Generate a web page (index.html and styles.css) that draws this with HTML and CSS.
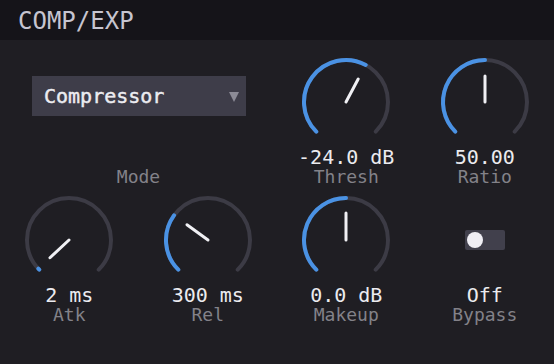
FILE: index.html
```html
<!DOCTYPE html>
<html lang="en">
<head>
    <meta charset="UTF-8">
    <meta name="viewport" content="width=device-width, initial-scale=1.0">
    <title>COMP/EXP</title>
    <link rel="stylesheet" href="styles.css">
</head>
<body>
    <div class="header">COMP/EXP</div>
    <div class="panel">
        <div class="cell mode">
            <div class="select">
                <span>Compressor</span>
                <svg class="arrow" width="10" height="10" viewBox="0 0 10 10">
                    <polygon points="0,0 10,0 5,10"/>
                </svg>
            </div>
            <div class="label">Mode</div>
        </div>

        <div class="cell">
            <svg class="knob" width="92" height="92" viewBox="0 0 92 92">
                <path class="track" d="M16.3 75.7 A42 42 0 1 1 75.7 75.7"/>
                <path class="fill" d="M16.3 75.7 A42 42 0 0 1 65.72 8.92"/>
                <line class="needle" x1="46" y1="46" x2="58.21" y2="23.04"/>
            </svg>
            <div class="value">-24.0 dB</div>
            <div class="label">Thresh</div>
        </div>

        <div class="cell">
            <svg class="knob" width="92" height="92" viewBox="0 0 92 92">
                <path class="track" d="M16.3 75.7 A42 42 0 1 1 75.7 75.7"/>
                <path class="fill" d="M16.3 75.7 A42 42 0 0 1 46 4"/>
                <line class="needle" x1="46" y1="46" x2="46" y2="20"/>
            </svg>
            <div class="value">50.00</div>
            <div class="label">Ratio</div>
        </div>

        <div class="cell">
            <svg class="knob" width="92" height="92" viewBox="0 0 92 92">
                <path class="track" d="M16.3 75.7 A42 42 0 1 1 75.7 75.7"/>
                <path class="fill" d="M16.3 75.7 A42 42 0 0 1 15.28 74.64"/>
                <line class="needle" x1="46" y1="46" x2="26.98" y2="63.73"/>
            </svg>
            <div class="value">2 ms</div>
            <div class="label">Atk</div>
        </div>

        <div class="cell">
            <svg class="knob" width="92" height="92" viewBox="0 0 92 92">
                <path class="track" d="M16.3 75.7 A42 42 0 1 1 75.7 75.7"/>
                <path class="fill" d="M16.3 75.7 A42 42 0 0 1 12.02 21.31"/>
                <line class="needle" x1="46" y1="46" x2="24.97" y2="30.72"/>
            </svg>
            <div class="value">300 ms</div>
            <div class="label">Rel</div>
        </div>

        <div class="cell">
            <svg class="knob" width="92" height="92" viewBox="0 0 92 92">
                <path class="track" d="M16.3 75.7 A42 42 0 1 1 75.7 75.7"/>
                <path class="fill" d="M16.3 75.7 A42 42 0 0 1 46 4"/>
                <line class="needle" x1="46" y1="46" x2="46" y2="19"/>
            </svg>
            <div class="value">0.0 dB</div>
            <div class="label">Makeup</div>
        </div>

        <div class="cell">
            <div class="switch-box">
                <div class="switch"><div class="thumb"></div></div>
            </div>
            <div class="value">Off</div>
            <div class="label">Bypass</div>
        </div>
    </div>
</body>
</html>
```

FILE: styles.css
```css
body {
    margin: 0;
    width: 554px;
    height: 364px;
    background-color: #1f1e23;
    font-family: "DejaVu Sans Mono", "Liberation Mono", monospace;
    overflow: hidden;
}
.header {
    height: 40px;
    background-color: #151419;
    color: #c6c5d0;
    font-size: 24px;
    line-height: 42px;
    padding-left: 18px;
}
.panel {
    display: grid;
    grid-template-columns: repeat(4, 1fr);
    row-gap: 7px;
    padding-top: 16px;
}
.cell {
    display: flex;
    flex-direction: column;
    align-items: center;
}
.cell.mode {
    grid-column: span 2;
    align-items: stretch;
    justify-content: space-between;
}
.select {
    margin: 20px 31px 0 32px;
    height: 40px;
    background-color: #3e3d49;
    color: #ececf0;
    font-size: 20px;
    -webkit-text-stroke: 0.45px #ececf0;
    display: flex;
    align-items: center;
    justify-content: space-between;
    padding: 0 7px 0 12px;
}
.arrow {
    display: block;
    fill: #8c8b96;
    margin-top: 1px;
}
.knob {
    display: block;
}
.track, .fill {
    fill: none;
    stroke-width: 4;
    stroke-linecap: round;
}
.track {
    stroke: #3c3b45;
}
.fill {
    stroke: #4a92e4;
}
.needle {
    stroke: #f0f0f4;
    stroke-width: 3;
    stroke-linecap: round;
}
.value {
    color: #ebebef;
    font-size: 20px;
    line-height: 20px;
    margin-top: -1px;
}
.label {
    color: #838289;
    font-size: 18px;
    line-height: 20px;
    text-align: center;
}
.switch-box {
    height: 92px;
    display: flex;
    align-items: center;
}
.switch {
    width: 40px;
    height: 20px;
    background-color: #41404c;
    border-radius: 2px;
    display: flex;
    align-items: center;
    padding-left: 2px;
    box-sizing: border-box;
}
.thumb {
    width: 16px;
    height: 16px;
    border-radius: 50%;
    background-color: #f0eff5;
}
```
